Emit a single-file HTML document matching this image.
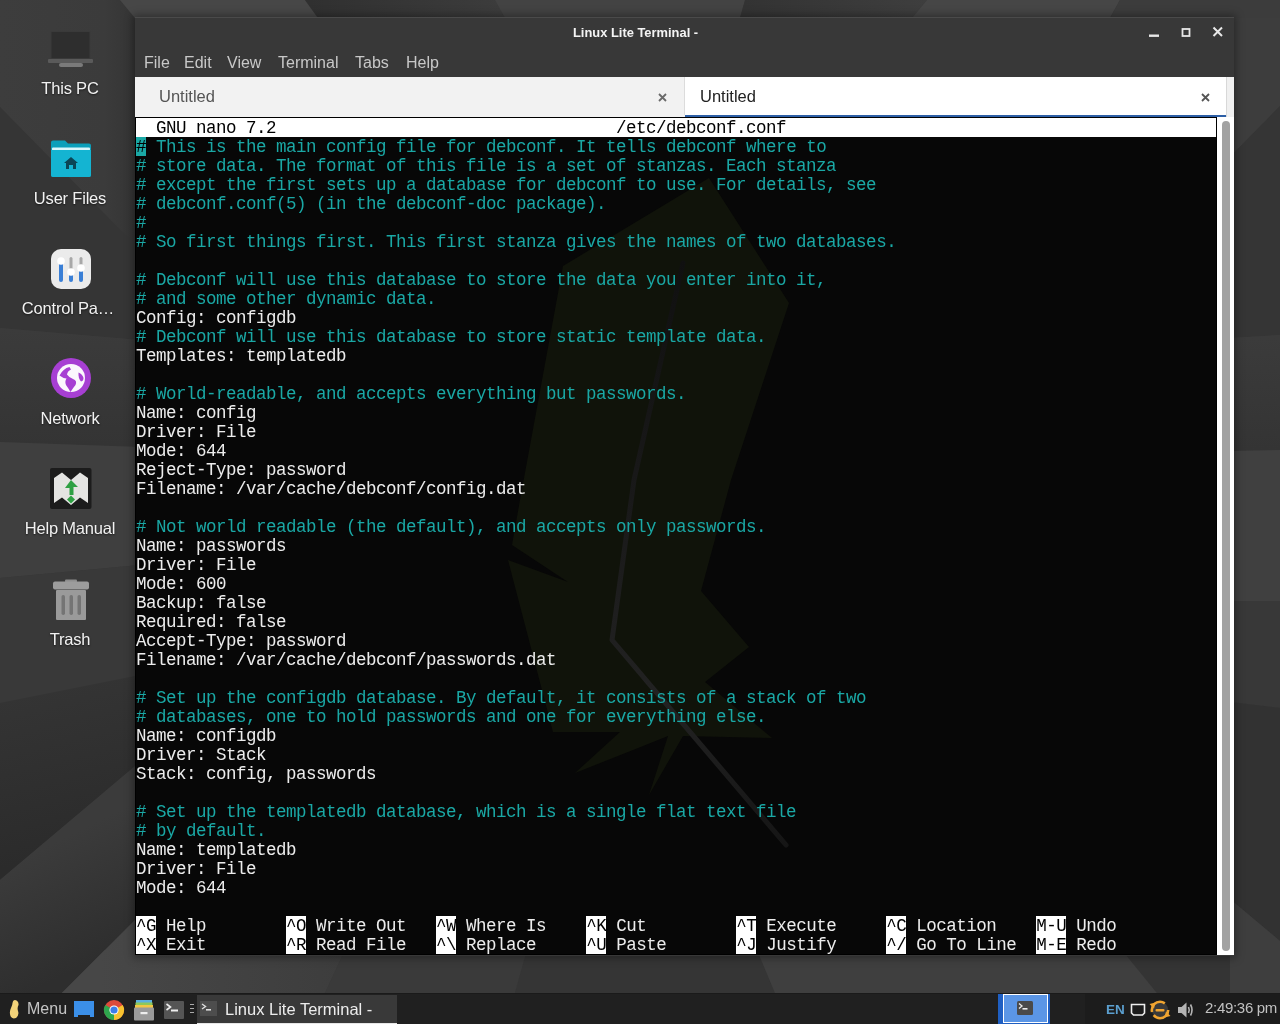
<!DOCTYPE html>
<html><head><meta charset="utf-8">
<style>
*{margin:0;padding:0;box-sizing:border-box}
html,body{width:1280px;height:1024px;overflow:hidden;background:#3a3a3a;font-family:"Liberation Sans",sans-serif}
.abs{position:absolute}
#bg{position:absolute;left:0;top:0}
.dlabel{position:absolute;width:140px;left:0;text-align:center;color:#f2f2f2;font-size:16.5px;letter-spacing:-0.2px;margin-top:1px;text-shadow:0 1px 2px rgba(0,0,0,.6)}
#win{position:absolute;left:135px;top:17px;width:1099px;height:939px;background:#383838;border-top:1px solid #4a4a4a;box-shadow:0 0 8px 2px rgba(0,0,0,.35)}
#title{position:absolute;left:0;top:1px;width:100%;height:30px;text-align:center;color:#f4f4f4;font-weight:bold;font-size:12.9px;line-height:28px;padding-left:0;white-space:nowrap}
.menu{position:absolute;top:53px;color:#c8c8c8;font-size:16px;line-height:20px}
#tabs{position:absolute;left:135px;top:77px;width:1099px;height:40px;background:#f0f0f0}
#term{position:absolute;left:135px;top:117px;width:1082px;height:838px;background:#070707;border:1px solid #000}
#rows{position:absolute;left:0;top:0;width:1080px;font-family:"Liberation Mono",monospace;font-size:17.5px;letter-spacing:-0.5px;line-height:19px;color:#ececec}
.r{height:19px;padding-top:1px;position:relative;white-space:pre}
.hdr{background:#fff;color:#000}
.c{color:#1aa8a5}
.inv{background:#fff;color:#000;display:inline-block;height:19px;vertical-align:top;position:relative;top:-1px;padding-top:1px}
.cur{background:#1aa8a5;color:#000;display:inline-block;height:19px;vertical-align:top;position:relative;top:-1px;padding-top:1px}
#sb{position:absolute;left:1217px;top:117px;width:17px;height:838px;background:#fff}
#thumb{position:absolute;left:5px;top:4px;width:8px;height:830px;background:#a2a2a2;border-radius:4px}
#taskbar{position:absolute;left:0;top:993px;width:1280px;height:31px;background:#202020;border-top:1px solid #1a1a1a}
</style></head><body><div id="root" style="position:absolute;left:0;top:0;width:1280px;height:1024px;will-change:transform">
<svg id="bg" width="1280" height="1024" viewBox="0 0 1280 1024"><defs>
<linearGradient id="gL1" gradientUnits="userSpaceOnUse" x1="0" y1="0" x2="140" y2="0"><stop offset="0" stop-color="#3d3d3d"/><stop offset="0.75" stop-color="#3b3b3b"/><stop offset="1" stop-color="#333"/></linearGradient>
<linearGradient id="gL3" gradientUnits="userSpaceOnUse" x1="0" y1="330" x2="0" y2="445"><stop offset="0" stop-color="#3b3b3b"/><stop offset="1" stop-color="#343434"/></linearGradient>
<linearGradient id="gL6" gradientUnits="userSpaceOnUse" x1="0" y1="700" x2="40" y2="860"><stop offset="0" stop-color="#343434"/><stop offset="1" stop-color="#2b2b2b"/></linearGradient>
<linearGradient id="gL7" gradientUnits="userSpaceOnUse" x1="40" y1="850" x2="95" y2="960"><stop offset="0" stop-color="#3b3b3b"/><stop offset="1" stop-color="#2e2e2e"/></linearGradient>
<linearGradient id="gT2" gradientUnits="userSpaceOnUse" x1="310" y1="0" x2="500" y2="0"><stop offset="0" stop-color="#303030"/><stop offset="1" stop-color="#3c3c3c"/></linearGradient>
<linearGradient id="gT4" gradientUnits="userSpaceOnUse" x1="745" y1="0" x2="925" y2="0"><stop offset="0" stop-color="#333"/><stop offset="1" stop-color="#3e3e3e"/></linearGradient>
<linearGradient id="gR3" gradientUnits="userSpaceOnUse" x1="0" y1="338" x2="0" y2="450"><stop offset="0" stop-color="#3b3b3b"/><stop offset="1" stop-color="#343434"/></linearGradient>
<linearGradient id="gB2" gradientUnits="userSpaceOnUse" x1="100" y1="0" x2="345" y2="0"><stop offset="0" stop-color="#474747"/><stop offset="1" stop-color="#3d3d3d"/></linearGradient>
</defs><rect width="1280" height="1024" fill="#383838"/><polygon points="0,0 120,0 140,25 140,250 0,107" fill="url(#gL1)"/><polygon points="0,107 140,250 140,340 0,328" fill="#353535"/><polygon points="0,328 140,340 140,447 0,442" fill="url(#gL3)"/><polygon points="0,442 140,447 140,565 0,578" fill="#3f3f3f"/><polygon points="0,578 140,565 140,675 0,703" fill="#393939"/><polygon points="0,703 140,675 140,762 0,880" fill="url(#gL6)"/><polygon points="0,880 140,762 140,915 62,993 0,993" fill="url(#gL7)"/><polygon points="62,993 140,915 140,993" fill="url(#gB2)"/><polygon points="120,0 305,0 318,18 135,18" fill="#474747"/><polygon points="305,0 495,0 505,18 318,18" fill="url(#gT2)"/><polygon points="495,0 745,0 740,18 505,18" fill="#434343"/><polygon points="745,0 927,0 912,18 740,18" fill="url(#gT4)"/><polygon points="927,0 1120,0 1110,18 912,18" fill="#464646"/><polygon points="1120,0 1280,0 1280,18 1110,18" fill="#3c3c3c"/><polygon points="1230,18 1280,18 1280,106 1230,157" fill="#3d3d3d"/><polygon points="1230,157 1280,106 1280,335 1230,338" fill="#353535"/><polygon points="1230,338 1280,335 1280,450 1230,451" fill="url(#gR3)"/><polygon points="1230,451 1280,450 1280,601 1230,601" fill="#404040"/><polygon points="1230,601 1280,601 1280,708 1230,702" fill="#383838"/><polygon points="1230,702 1280,708 1280,941 1230,899" fill="#323232"/><polygon points="1230,899 1280,941 1280,993 1230,993" fill="#3e3e3e"/><polygon points="105,950 345,950 325,993 62,993" fill="url(#gB2)"/><polygon points="345,950 527,950 515,993 325,993" fill="#3a3a3a"/><polygon points="527,950 757,950 775,993 515,993" fill="#353535"/><polygon points="757,950 1122,950 1157,993 775,993" fill="#3f3f3f"/><polygon points="1122,950 1230,950 1230,993 1157,993" fill="#343434"/></svg>
<div id="desk">
<!-- This PC -->
<svg class="abs" style="left:46px;top:28px" width="50" height="42" viewBox="0 0 50 42">
  <rect x="5" y="3.5" width="39" height="27" fill="#2e2e2e" stroke="#3a3a3a" stroke-width="1"/>
  <rect x="2" y="31" width="45" height="4" rx="1" fill="#5a5a5a"/>
  <rect x="13" y="35" width="24" height="4" rx="2" fill="#7a7a7a"/>
</svg>
<div class="dlabel" style="top:78px">This PC</div>
<!-- User Files -->
<svg class="abs" style="left:48px;top:138px" width="46" height="42" viewBox="0 0 46 42">
  <path d="M3 4.5 Q3 2.5 5 2.5 H17 L20 5.5 H41 Q43 5.5 43 7.5 V37 Q43 39 41 39 H5 Q3 39 3 37 Z" fill="#0b9fba"/>
  <rect x="4" y="9.5" width="38" height="3" rx="1" fill="#d8f6fb"/>
  <path d="M3 12 H43 V37 Q43 39 41 39 H5 Q3 39 3 37 Z" fill="#14b4d2"/>
  <path d="M23 19 L30 25 H28 V31 H25 V27 H21 V31 H18 V25 H16 Z" fill="#0b4656"/>
</svg>
<div class="dlabel" style="top:188px">User Files</div>
<!-- Control panel -->
<svg class="abs" style="left:50px;top:248px" width="42" height="42" viewBox="0 0 42 42">
  <rect x="1" y="1" width="40" height="40" rx="10" fill="#ebebeb"/>
  <rect x="9" y="14" width="4" height="20" rx="2" fill="#3a7fd6"/>
  <rect x="19.5" y="9" width="3" height="14" rx="1.5" fill="#a8a8a8"/>
  <rect x="19" y="24" width="4" height="10" rx="2" fill="#3a7fd6"/>
  <rect x="29.5" y="9" width="3" height="12" rx="1.5" fill="#a8a8a8"/>
  <rect x="29" y="20" width="4" height="14" rx="2" fill="#3a7fd6"/>
  <circle cx="11" cy="13" r="3.8" fill="#fff"/>
  <circle cx="21" cy="24" r="3.8" fill="#fff"/>
  <circle cx="31" cy="20" r="3.8" fill="#fff"/>
</svg>
<div class="dlabel" style="top:298px;left:-2px">Control Pa…</div>
<!-- Network -->
<svg class="abs" style="left:50px;top:357px" width="42" height="42" viewBox="0 0 42 42">
  <circle cx="21" cy="21" r="20" fill="#a73fd3"/>
  <circle cx="21" cy="21" r="14" fill="#fbf7fd"/>
  <path d="M19.5 10 Q13 11.5 9.5 18.5 Q12.5 21 16.5 21.5 Q14.5 24.5 16 28 Q18.5 31.5 20.5 35 Q23 31 25.5 28 Q27.5 23.5 23 22 Q19 20.5 17 17.5 Q17.5 14 21 12.5 Z" fill="#a73fd3"/>
  <path d="M28.5 15.5 Q32.5 17 33.5 21 Q33.5 24 31 24.5 Q28 21 28.5 15.5 Z" fill="#a73fd3"/>
</svg>
<div class="dlabel" style="top:408px">Network</div>
<!-- Help manual -->
<svg class="abs" style="left:50px;top:468px" width="42" height="42" viewBox="0 0 42 42">
  <rect x="0" y="0" width="41.5" height="41" rx="2" fill="#1c1c1c"/>
  <path d="M4 10 L12 4.5 L21 12 L30 4.5 L38 10 V35 L30 29.5 L21 37 L12 29.5 L4 35 Z" fill="#e4e4e2"/>
  <path d="M21 12 L28 19 H23.5 V27 H19.5 V20 H15 Z" fill="#2ea043"/>
  <path d="M21 27.5 L25 31.5 L21 35.5 L17 31.5 Z" fill="#2ea043"/>
</svg>
<div class="dlabel" style="top:518px">Help Manual</div>
<!-- Trash -->
<svg class="abs" style="left:50px;top:578px" width="42" height="44" viewBox="0 0 42 44">
  <rect x="15" y="1.5" width="12" height="3" rx="1" fill="#8e8e8e"/>
  <rect x="3" y="3.5" width="36" height="8" rx="2" fill="#9c9c9c"/>
  <rect x="6" y="12" width="30" height="30" rx="1" fill="#9a9a9a"/>
  <rect x="11.5" y="17" width="3.5" height="20" rx="1.7" fill="#747474"/>
  <rect x="19.5" y="17" width="3.5" height="20" rx="1.7" fill="#747474"/>
  <rect x="27.5" y="17" width="3.5" height="20" rx="1.7" fill="#747474"/>
</svg>
<div class="dlabel" style="top:629px">Trash</div>
</div>
<div id="win">
  <div id="title" style="left:438px;width:124px;text-align:left">Linux Lite Terminal -</div>
  <svg class="abs" style="left:1012px;top:10px" width="14" height="14" viewBox="0 0 14 14"><rect x="2" y="6.5" width="10" height="2.4" fill="#e8e8e8"/></svg>
  <svg class="abs" style="left:1044px;top:8px" width="14" height="14" viewBox="0 0 14 14"><rect x="3.5" y="3" width="7" height="7" fill="none" stroke="#e8e8e8" stroke-width="1.8"/></svg>
  <svg class="abs" style="left:1076px;top:7px" width="14" height="14" viewBox="0 0 14 14"><path d="M2.5 2.5L11 11M11 2.5L2.5 11" stroke="#e8e8e8" stroke-width="2"/></svg>
</div>
<div class="menu" style="left:144px">File</div>
<div class="menu" style="left:184px">Edit</div>
<div class="menu" style="left:227px">View</div>
<div class="menu" style="left:278px">Terminal</div>
<div class="menu" style="left:355px">Tabs</div>
<div class="menu" style="left:406px">Help</div>
<div id="tabs">
  <div class="abs" style="left:0;top:0;width:549px;height:40px;background:#f2f2f2"></div>
  <div class="abs" style="left:24px;top:9px;font-size:16.5px;line-height:20px;color:#555">Untitled</div>
  <svg class="abs" style="left:523px;top:16px" width="9" height="9" viewBox="0 0 9 9"><path d="M1 1L8 8M8 1L1 8" stroke="#6a6a6a" stroke-width="1.8"/></svg>
  <div class="abs" style="left:549px;top:0;width:1px;height:38px;background:#dcdcdc"></div>
  <div class="abs" style="left:550px;top:0;width:541px;height:38px;background:#fff"></div>
  <div class="abs" style="left:550px;top:38px;width:541px;height:2px;background:#2d5fa6"></div>
  <div class="abs" style="left:565px;top:9px;font-size:16.5px;line-height:20px;color:#222">Untitled</div>
  <svg class="abs" style="left:1066px;top:16px" width="9" height="9" viewBox="0 0 9 9"><path d="M1 1L8 8M8 1L1 8" stroke="#555" stroke-width="1.8"/></svg>
  <div class="abs" style="left:1091px;top:0;width:1px;height:40px;background:#d8d8d8"></div>
</div>
<div id="term"><svg class="abs" style="left:0;top:0" width="1080" height="836" viewBox="0 0 1080 836"><polygon points="573,60 653,185 595,362 565,473 613,529 569,564 636,620 547,618 513,677 532,618 439,655 484,614 417,614 372,442 432,464 376,427 384,382 427,148" fill="#10130a"/><defs><linearGradient id="stemg" gradientUnits="userSpaceOnUse" x1="0" y1="140" x2="0" y2="730"><stop offset="0" stop-color="#101010"/><stop offset="0.45" stop-color="#1a1a1a"/><stop offset="0.75" stop-color="#222"/><stop offset="1" stop-color="#151515"/></linearGradient></defs><path d="M547,145 L498,362 L476,522 L650,727" stroke="url(#stemg)" stroke-width="5" fill="none" stroke-linecap="round" stroke-linejoin="round"/></svg><div id="rows">
<div class="r hdr">  GNU nano 7.2                                  /etc/debconf.conf                                           </div>
<div class="r c"><span class="cur">#</span> This is the main config file for debconf. It tells debconf where to</div>
<div class="r c"># store data. The format of this file is a set of stanzas. Each stanza</div>
<div class="r c"># except the first sets up a database for debconf to use. For details, see</div>
<div class="r c"># debconf.conf(5) (in the debconf-doc package).</div>
<div class="r c">#</div>
<div class="r c"># So first things first. This first stanza gives the names of two databases.</div>
<div class="r"></div>
<div class="r c"># Debconf will use this database to store the data you enter into it,</div>
<div class="r c"># and some other dynamic data.</div>
<div class="r">Config: configdb</div>
<div class="r c"># Debconf will use this database to store static template data.</div>
<div class="r">Templates: templatedb</div>
<div class="r"></div>
<div class="r c"># World-readable, and accepts everything but passwords.</div>
<div class="r">Name: config</div>
<div class="r">Driver: File</div>
<div class="r">Mode: 644</div>
<div class="r">Reject-Type: password</div>
<div class="r">Filename: /var/cache/debconf/config.dat</div>
<div class="r"></div>
<div class="r c"># Not world readable (the default), and accepts only passwords.</div>
<div class="r">Name: passwords</div>
<div class="r">Driver: File</div>
<div class="r">Mode: 600</div>
<div class="r">Backup: false</div>
<div class="r">Required: false</div>
<div class="r">Accept-Type: password</div>
<div class="r">Filename: /var/cache/debconf/passwords.dat</div>
<div class="r"></div>
<div class="r c"># Set up the configdb database. By default, it consists of a stack of two</div>
<div class="r c"># databases, one to hold passwords and one for everything else.</div>
<div class="r">Name: configdb</div>
<div class="r">Driver: Stack</div>
<div class="r">Stack: config, passwords</div>
<div class="r"></div>
<div class="r c"># Set up the templatedb database, which is a single flat text file</div>
<div class="r c"># by default.</div>
<div class="r">Name: templatedb</div>
<div class="r">Driver: File</div>
<div class="r">Mode: 644</div>
<div class="r"></div>
<div class="r"><span class="inv">^G</span> Help        <span class="inv">^O</span> Write Out   <span class="inv">^W</span> Where Is    <span class="inv">^K</span> Cut         <span class="inv">^T</span> Execute     <span class="inv">^C</span> Location    <span class="inv">M-U</span> Undo</div>
<div class="r"><span class="inv">^X</span> Exit        <span class="inv">^R</span> Read File   <span class="inv">^\</span> Replace     <span class="inv">^U</span> Paste       <span class="inv">^J</span> Justify     <span class="inv">^/</span> Go To Line  <span class="inv">M-E</span> Redo</div>
</div></div>
<div id="sb"><div id="thumb"></div></div>
<div id="taskbar">
  <svg class="abs" style="left:6px;top:3px" width="16" height="24" viewBox="0 0 16 24"><path d="M9 3 Q13 4 12.5 8 Q11 11 12 14 Q13.5 18 10 21 Q6 22.5 4.5 19 Q3 15 5 11 Q6.5 8 6.5 6 Q7 3 9 3 Z" fill="#f3d37a"/></svg>
  <div class="abs" style="left:27px;top:6px;font-size:16px;line-height:18px;color:#c4c4c4">Menu</div>
  <svg class="abs" style="left:72px;top:5px" width="24" height="22" viewBox="0 0 24 22"><path d="M2 2 H22 V18 H18 V16 H6 V18 H2 Z" fill="#3b8fe8"/></svg>
  <svg class="abs" style="left:103px;top:5px" width="22" height="22" viewBox="0 0 22 22">
    <circle cx="11" cy="11" r="10" fill="#dd4a3b"/>
    <path d="M11 11 L2.3 6 A10 10 0 0 0 11 21 Z" fill="#2ea64d"/>
    <path d="M11 11 L11 21 A10 10 0 0 0 19.7 6 Z" fill="#f7c22f"/>
    <circle cx="11" cy="11" r="4.6" fill="#fff"/>
    <circle cx="11" cy="11" r="3.6" fill="#3d7de8"/>
  </svg>
  <svg class="abs" style="left:133px;top:4px" width="22" height="24" viewBox="0 0 22 24">
    <rect x="3" y="2" width="16" height="3" fill="#5bb0e0"/>
    <rect x="2.5" y="4.5" width="17" height="3" fill="#8dc85a"/>
    <rect x="2" y="7" width="18" height="3" fill="#f2c744"/>
    <rect x="1" y="9.5" width="20" height="13" rx="1" fill="#9a9a9a"/>
    <rect x="7.5" y="14" width="7" height="2.2" fill="#eee"/>
  </svg>
  <svg class="abs" style="left:163px;top:6px" width="22" height="20" viewBox="0 0 22 20">
    <rect x="1" y="1" width="20" height="18" rx="1" fill="#555"/>
    <path d="M3.5 4 L7.5 7 L3.5 10" stroke="#eee" stroke-width="1.6" fill="none"/>
    <rect x="8" y="9.5" width="7" height="2" fill="#eee"/>
  </svg>
  <div class="abs" style="left:190px;top:10px;width:4px;height:1px;background:#aaa"></div>
  <div class="abs" style="left:190px;top:14px;width:4px;height:1px;background:#aaa"></div>
  <div class="abs" style="left:190px;top:18px;width:4px;height:1px;background:#aaa"></div>
  <div class="abs" style="left:197px;top:1px;width:200px;height:30px;background:#393939"></div>
  <div class="abs" style="left:197px;top:29px;width:200px;height:2px;background:#e6e6e6"></div>
  <svg class="abs" style="left:200px;top:7px" width="17" height="16" viewBox="0 0 17 16">
    <rect x="0" y="0" width="17" height="15" fill="#4d4d4d"/>
    <path d="M2 3 L5.5 5.5 L2 8" stroke="#ddd" stroke-width="1.4" fill="none"/>
    <rect x="6" y="8" width="5" height="1.6" fill="#ddd"/>
  </svg>
  <div class="abs" style="left:225px;top:6px;font-size:16.5px;line-height:18px;color:#ececec">Linux Lite Terminal -</div>
  <div class="abs" style="left:998px;top:0;width:52px;height:31px;background:#1f5fc2"></div>
  <div class="abs" style="left:1003px;top:0px;width:45px;height:29px;background:#5b96e6;border:1px solid #fff"></div>
  <svg class="abs" style="left:1017px;top:7px" width="16" height="14" viewBox="0 0 16 14">
    <rect x="0" y="0" width="16" height="14" rx="1.5" fill="#4a4a4a"/>
    <path d="M2 2.5 L5 5 L2 7.5" stroke="#eee" stroke-width="1.3" fill="none"/>
    <rect x="5.5" y="7" width="5" height="1.6" fill="#eee"/>
  </svg>
  <div class="abs" style="left:1085px;top:0;width:195px;height:31px;background:#1c1c1c"></div>
  <div class="abs" style="left:1106px;top:8px;font-size:13.5px;font-weight:bold;line-height:16px;color:#5b9fcf">EN</div>
  <svg class="abs" style="left:1130px;top:9px" width="16" height="14" viewBox="0 0 16 14"><path d="M1.5 1.5 H14.5 V10 L12.5 12 H3.5 L1.5 10 Z" fill="none" stroke="#eee" stroke-width="1.6"/></svg>
  <svg class="abs" style="left:1149px;top:4px" width="22" height="24" viewBox="0 0 22 24">
    <circle cx="11" cy="12" r="8.2" fill="#3a3a3a" stroke="#f0a430" stroke-width="2.6" stroke-dasharray="20 3.5 20 8"/>
    <path d="M0.5 6 L6.5 4.5 L5 10.5 Z" fill="#f0a430"/><path d="M21.5 18 L15.5 19.5 L17 13.5 Z" fill="#f0a430"/>
    <rect x="6.5" y="11" width="9" height="2.4" rx="1" fill="#f0a430"/>
  </svg>
  <svg class="abs" style="left:1177px;top:7px" width="18" height="18" viewBox="0 0 18 18">
    <path d="M1 6 H4.5 L9.5 1.5 V16.5 L4.5 12 H1 Z" fill="#b4b4b4"/>
    <path d="M11.5 6 Q13 9 11.5 12" stroke="#b4b4b4" stroke-width="1.6" fill="none"/>
    <path d="M13.5 3.5 Q16.5 9 13.5 14.5" stroke="#b4b4b4" stroke-width="1.6" fill="none"/>
  </svg>
  <div class="abs" style="left:1205px;top:5px;font-size:15px;letter-spacing:-0.3px;line-height:18px;color:#c2c2c2;white-space:nowrap">2:49:36 pm</div>
</div>
</div></body></html>
